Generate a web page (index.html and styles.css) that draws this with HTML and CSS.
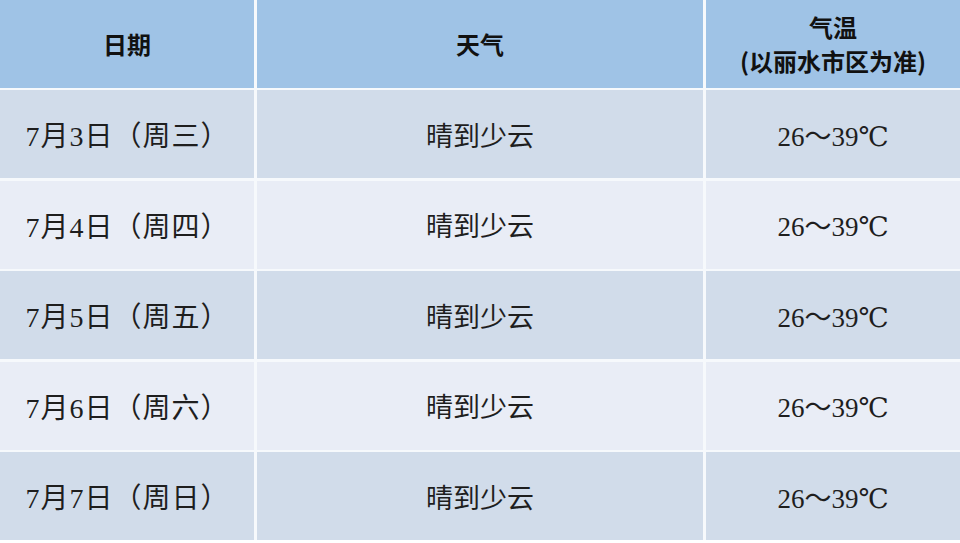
FILE: index.html
```html
<!DOCTYPE html>
<html lang="zh-CN">
<head>
<meta charset="utf-8">
<title>丽水天气</title>
<link rel="stylesheet" href="styles.css">
</head>
<body>
<div class="table">
  <div class="cell head">日期</div>
  <div class="cell head">天气</div>
  <div class="cell head two"><span>气温</span><span>(以丽水市区为准)</span></div>

  <div class="cell odd date">7月3日（周三）</div>
  <div class="cell odd">晴到少云</div>
  <div class="cell odd">26～39℃</div>

  <div class="cell even date">7月4日（周四）</div>
  <div class="cell even">晴到少云</div>
  <div class="cell even">26～39℃</div>

  <div class="cell odd date">7月5日（周五）</div>
  <div class="cell odd">晴到少云</div>
  <div class="cell odd">26～39℃</div>

  <div class="cell even date">7月6日（周六）</div>
  <div class="cell even">晴到少云</div>
  <div class="cell even">26～39℃</div>

  <div class="cell odd date">7月7日（周日）</div>
  <div class="cell odd">晴到少云</div>
  <div class="cell odd">26～39℃</div>
</div>
</body>
</html>
```
FILE: styles.css
```css
html, body {
  margin: 0;
  padding: 0;
  background: #ffffff;
}

.table {
  display: grid;
  grid-template-columns: 254px 446px 1fr;
  grid-template-rows: 87.5px repeat(5, 88px);
  column-gap: 3px;
  row-gap: 2.5px;
  width: 960px;
  background: #f6f9fc;
}

.cell {
  display: flex;
  align-items: center;
  justify-content: center;
  font-family: "Liberation Serif", "DejaVu Serif", "Noto Sans CJK SC", serif;
  font-size: 27px;
  color: #1e1e1e;
  white-space: nowrap;
}

.date {
  font-size: 28px;
  letter-spacing: 1px;
  padding-left: 1px;
}

.head {
  background: #9fc3e6;
  font-family: "Noto Sans CJK SC", "Noto Sans", sans-serif;
  font-weight: 700;
  font-size: 24px;
  color: #111111;
}

.two {
  flex-direction: column;
  line-height: 34px;
}

.odd {
  background: #d1dcea;
}

.even {
  background: #e9edf6;
}
```
